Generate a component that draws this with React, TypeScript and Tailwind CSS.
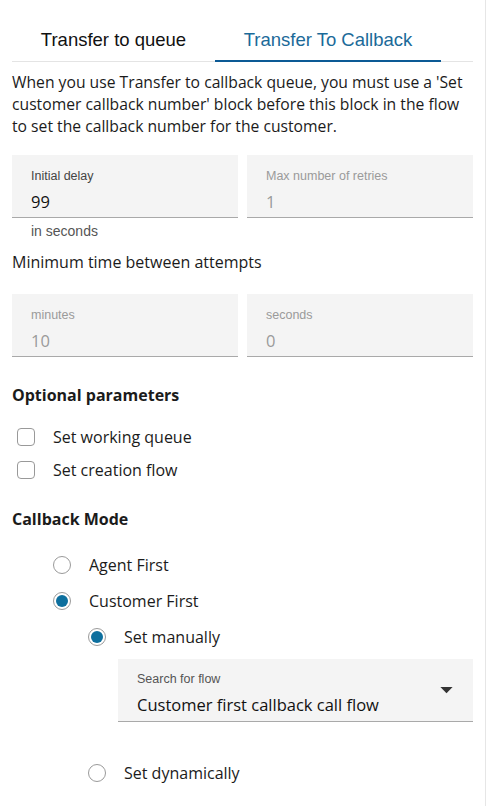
import React from 'react';

const body = { fontFamily: '"Open Sans", "Noto Sans", sans-serif' };
const arial = { fontFamily: '"Liberation Sans", Arial, sans-serif' };

interface FieldProps {
  label: string;
  value: string;
  muted?: boolean;
}

const Field: React.FC<FieldProps> = ({ label, value, muted }) => (
  <div className="flex-1 h-[63px] bg-[#f4f4f4] border-b border-[#a9a9a9] pl-[19px] pt-[14px]">
    <div className={`text-[12.5px] leading-[14px] ${muted ? 'text-[#9a9a9a]' : 'text-[#444]'}`} style={arial}>
      {label}
    </div>
    <div className={`mt-[9px] text-[16.5px] leading-[20px] ${muted ? 'text-[#9a9a9a]' : 'text-[#111]'}`} style={body}>
      {value}
    </div>
  </div>
);

const Checkbox: React.FC<{ label: string }> = ({ label }) => (
  <div className="flex items-center h-[33px]">
    <div className="ml-[5px] w-[18px] h-[18px] rounded-[4px] border border-[#999] bg-white" />
    <span className="ml-[18px] text-[16px] text-[#1b1b1b]">{label}</span>
  </div>
);

const Radio: React.FC<{ label: string; checked?: boolean }> = ({ label, checked }) => (
  <div className="flex items-center h-[36px]">
    <div className="w-[18px] h-[18px] rounded-full border border-[#9a9a9a] bg-white flex items-center justify-center">
      {checked && <div className="w-[12px] h-[12px] rounded-full bg-[#0d6f9e]" />}
    </div>
    <span className="ml-[18px] text-[16px] text-[#1b1b1b]">{label}</span>
  </div>
);

export default function App() {
  return (
    <div className="w-[486px] h-[806px] bg-white border-r border-[#e6e6e6] overflow-hidden" style={body}>
      <div className="px-[12px]">
        <div className="flex h-[62px] border-b border-[#e4e4e4]" style={arial}>
          <div className="w-[203px] flex items-center justify-center text-[18.5px] text-[#111] pt-[25px] pb-[7px]">
            Transfer to queue
          </div>
          <div className="w-[226px] flex items-center justify-center text-[18.5px] text-[#1b6a99] border-b-2 border-[#0c5a95] -mb-px pt-[25px] pb-[5px]">
            Transfer To Callback
          </div>
        </div>

        <p className="mt-[9px] text-[15.7px] leading-[22px] text-[#1b1b1b]">
          When you use Transfer to callback queue, you must use a 'Set customer callback number' block before this block in the flow to set the callback number for the customer.
        </p>

        <div className="mt-[18px] flex gap-[9px]">
          <Field label="Initial delay" value="99" />
          <Field label="Max number of retries" value="1" muted />
        </div>
        <div className="pl-[19px] mt-[4px] text-[14px] leading-[18px] text-[#555]" style={arial}>
          in seconds
        </div>
        <div className="mt-[12px] text-[16px] leading-[20px] text-[#1b1b1b]">Minimum time between attempts</div>

        <div className="mt-[22px] flex gap-[9px]">
          <Field label="minutes" value="10" muted />
          <Field label="seconds" value="0" muted />
        </div>

        <div className="mt-[28px] text-[16px] leading-[20px] font-bold text-[#1b1b1b]">Optional parameters</div>
        <div className="mt-[15px]">
          <Checkbox label="Set working queue" />
          <Checkbox label="Set creation flow" />
        </div>

        <div className="mt-[23px] text-[16px] leading-[20px] font-bold text-[#1b1b1b]">Callback Mode</div>

        <div className="mt-[18px] pl-[41px]">
          <Radio label="Agent First" />
          <Radio label="Customer First" checked />
          <div className="pl-[35px]">
            <Radio label="Set manually" checked />
            <div className="ml-[30px] mt-[4px] h-[63px] bg-[#f4f4f4] border-b border-[#a9a9a9] pl-[19px] pt-[13px] pr-[20px] flex items-start">
              <div className="flex-1">
                <div className="text-[12.5px] leading-[14px] text-[#555]" style={arial}>Search for flow</div>
                <div className="mt-[8px] text-[16.5px] leading-[22px] text-[#111]">Customer first callback call flow</div>
              </div>
              <svg width="13" height="7" viewBox="0 0 14 8" className="mt-[15px]">
                <path d="M0 0 L14 0 L7 7 Z" fill="#333" />
              </svg>
            </div>
            <div className="mt-[33px]">
              <Radio label="Set dynamically" />
            </div>
          </div>
        </div>
      </div>
    </div>
  );
}
